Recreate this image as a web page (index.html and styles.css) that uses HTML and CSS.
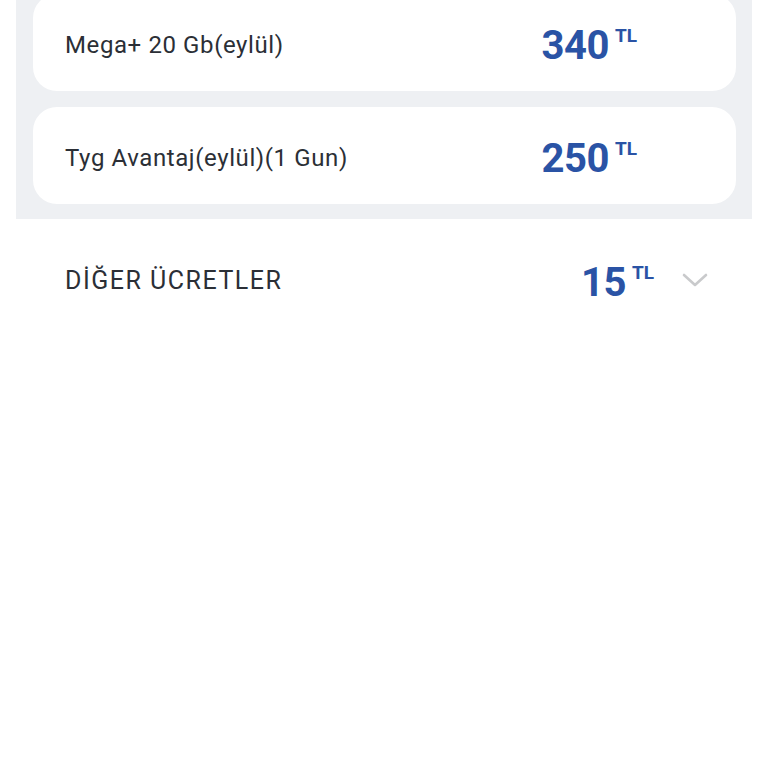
FILE: index.html
```html
<!DOCTYPE html>
<html lang="tr">

<head>
    <meta charset="UTF-8">
    <meta name="viewport" content="width=device-width, initial-scale=1.0">
    <title>Faturam</title>
    <link rel="stylesheet" href="styles.css">
</head>

<body>
    <div class="packages">
        <div class="package-card">
            <p class="package-name">Mega+ 20 Gb(eylül)</p>
            <div class="price">340<span class="currency">TL</span></div>
        </div>
        <div class="package-card">
            <p class="package-name">Tyg Avantaj(eylül)(1 Gun)</p>
            <div class="price">250<span class="currency">TL</span></div>
        </div>
    </div>

    <div class="other-fees">
        <p class="other-title">DİĞER ÜCRETLER</p>
        <div class="price">15<span class="currency">TL</span></div>
        <svg class="chevron" width="26" height="16" viewBox="0 0 26 16">
            <path d="M2 3 L13 13 L24 3" fill="none" stroke="#c9cacc" stroke-width="2.6" stroke-linecap="round" stroke-linejoin="round" />
        </svg>
    </div>
</body>

</html>
```

FILE: styles.css
```css
* {
    box-sizing: border-box;
}

body {
    margin: 0;
    background: #fff;
    font-family: Roboto, "Noto Sans", sans-serif;
    color: #2b2f36;
}

.packages {
    margin: -6px 16px 0 16px;
    padding: 0 16px 15px 17px;
    background: #eef0f3;
    display: flex;
    flex-direction: column;
    gap: 16px;
}

.package-card {
    height: 97px;
    background: #fff;
    border-radius: 24px;
    display: flex;
    align-items: center;
    padding: 0 99px 0 32px;
}

.package-name {
    margin: 0;
    flex: 1;
    font-size: 24px;
    letter-spacing: 0.6px;
    padding-top: 4px;
}

.price {
    color: #2a53a5;
    font-size: 40px;
    font-weight: 700;
    letter-spacing: -0.5px;
    line-height: 1;
    display: flex;
    align-items: flex-start;
    padding-top: 6px;
}

.currency {
    font-size: 19px;
    margin-left: 6px;
    margin-top: 0;
    letter-spacing: 0;
}

.other-fees {
    display: flex;
    align-items: center;
    padding: 38px 60px 0 65px;
}

.other-title {
    margin: 0;
    flex: 1;
    font-size: 25px;
    letter-spacing: 1.5px;
}

.chevron {
    margin-left: 28px;
    display: block;
}
```
